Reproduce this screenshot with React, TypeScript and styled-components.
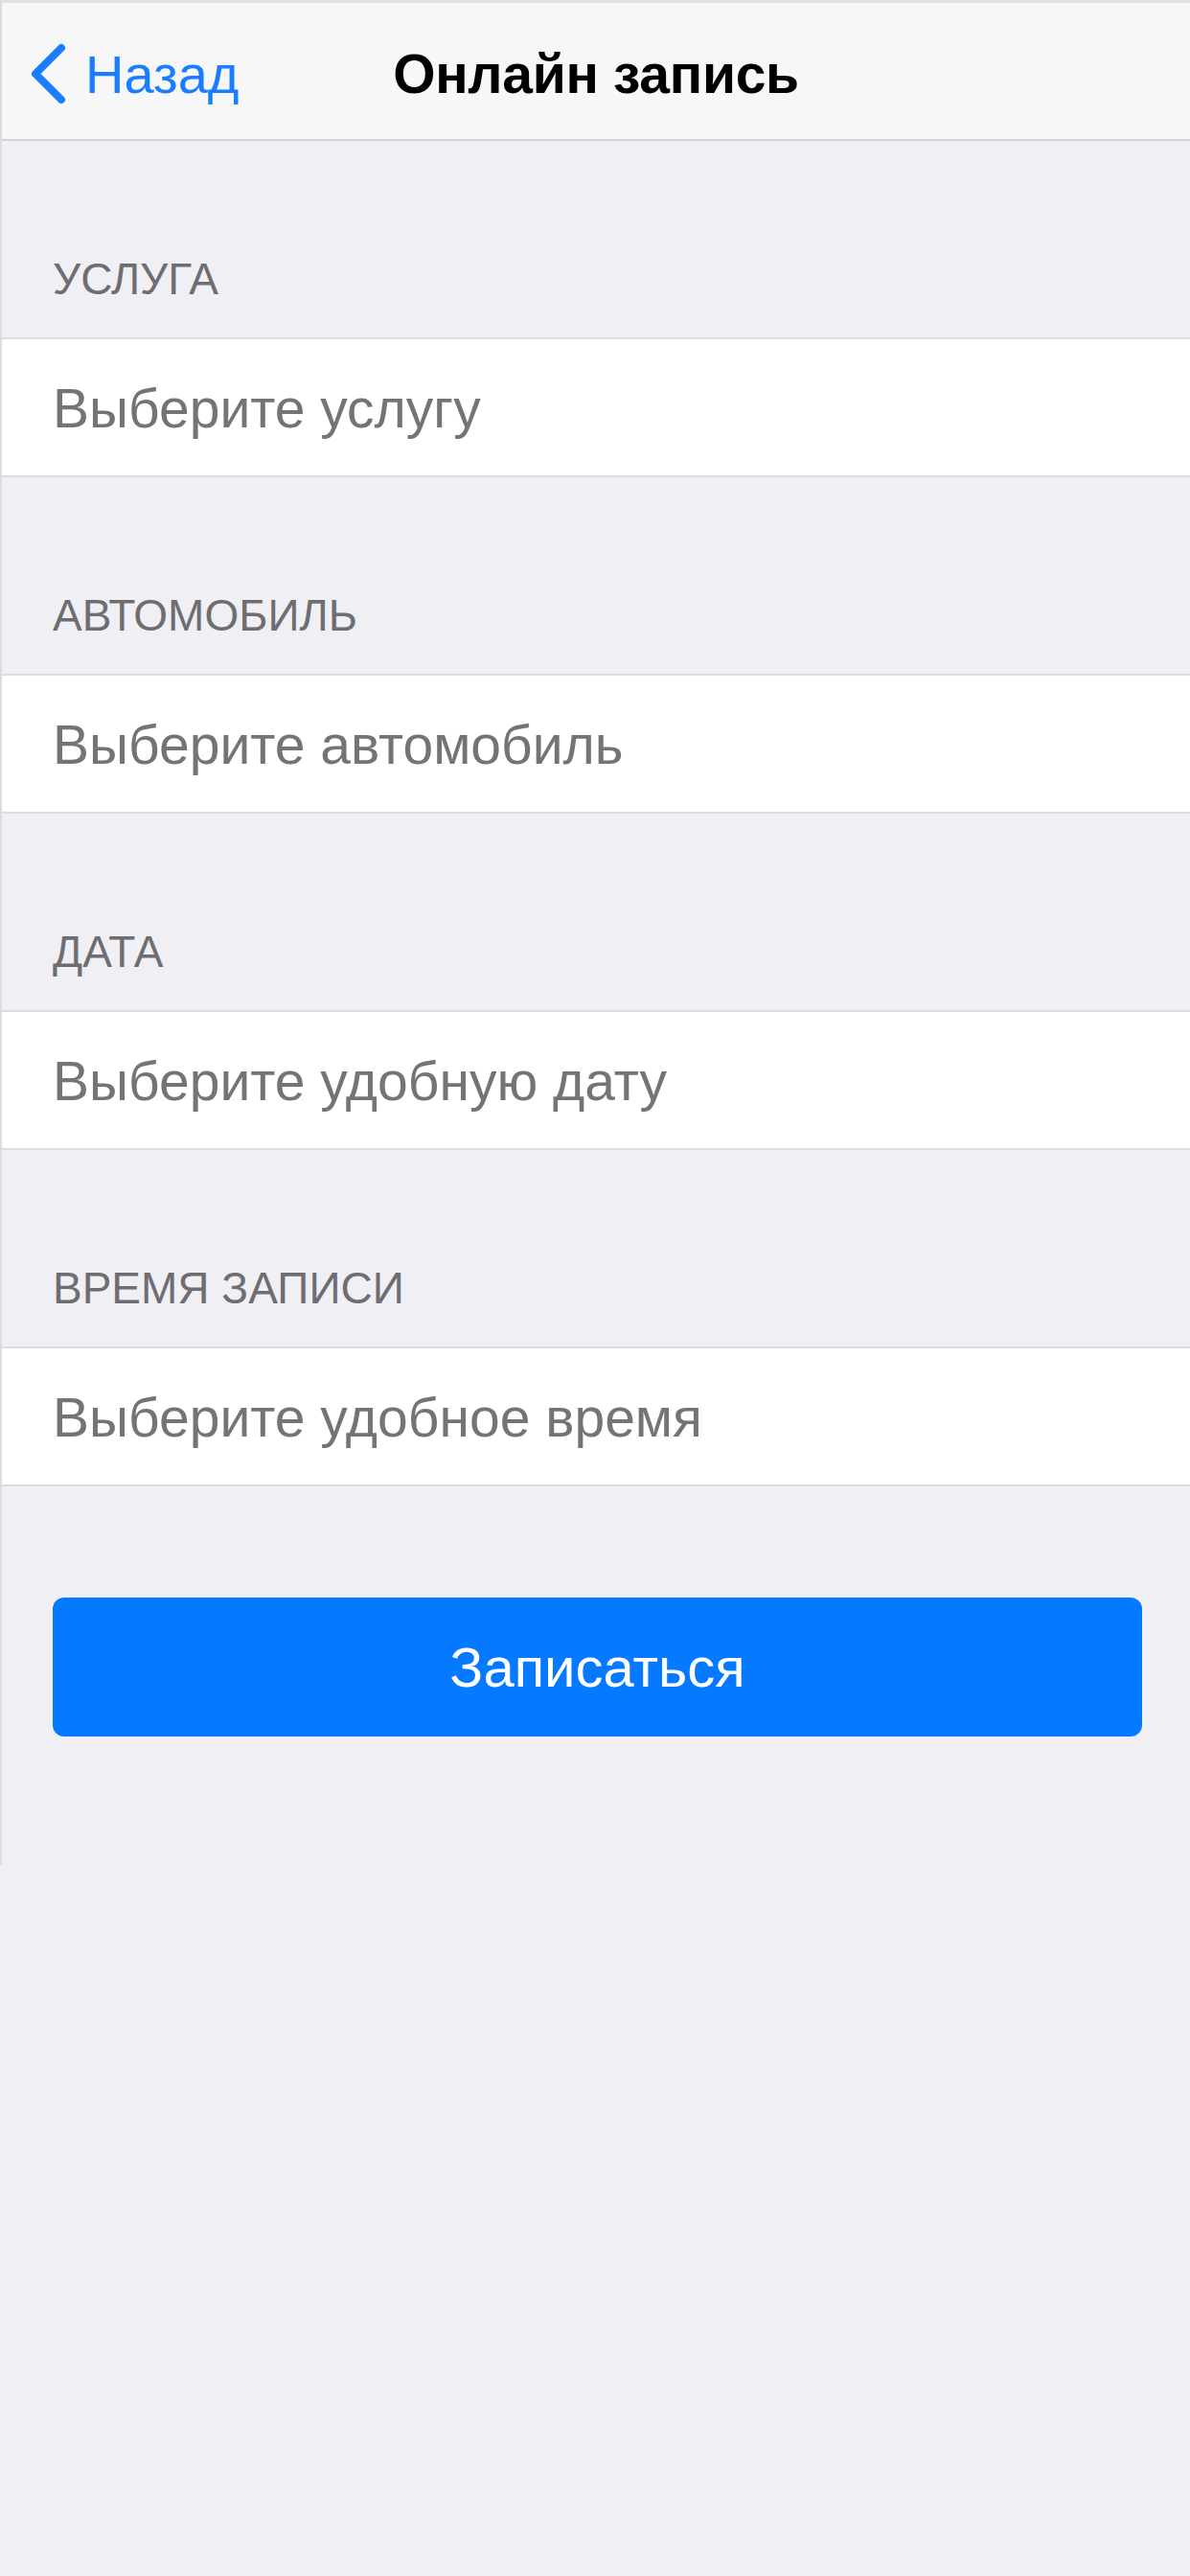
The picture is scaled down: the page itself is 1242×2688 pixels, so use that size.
import React from 'react';
import styled, { createGlobalStyle } from 'styled-components';

const GlobalStyle = createGlobalStyle`
  html, body {
    margin: 0;
    padding: 0;
    background: #efeff4;
  }
  body {
    font-family: 'Liberation Sans', Arial, sans-serif;
    -webkit-font-smoothing: antialiased;
  }
`;

const fields = [
  { label: 'УСЛУГА', placeholder: 'Выберите услугу' },
  { label: 'АВТОМОБИЛЬ', placeholder: 'Выберите автомобиль' },
  { label: 'ДАТА', placeholder: 'Выберите удобную дату' },
  { label: 'ВРЕМЯ ЗАПИСИ', placeholder: 'Выберите удобное время' },
];

const App = () => {
  return (
    <>
      <GlobalStyle />
      <Page>
        <Screen>
          <NavBar>
            <BackButton>
              <svg width="42" height="64" viewBox="0 0 42 64" fill="none">
                <path
                  d="M35 5 L8 32 L35 59"
                  stroke="#1a7cff"
                  strokeWidth="8"
                  strokeLinecap="round"
                  strokeLinejoin="round"
                />
              </svg>
              <BackLabel>Назад</BackLabel>
            </BackButton>
            <Title>Онлайн запись</Title>
            <span />
          </NavBar>

          {fields.map(f => (
            <Section key={f.label}>
              <SectionLabel>{f.label}</SectionLabel>
              <Row>
                <Placeholder>{f.placeholder}</Placeholder>
              </Row>
            </Section>
          ))}

          <SubmitButton type="button">Записаться</SubmitButton>
        </Screen>
      </Page>
    </>
  );
};

const Page = styled.div`
  min-height: 2688px;
  background: #efeff4;
`;

const Screen = styled.div`
  display: flex;
  flex-direction: column;
  height: 1946px;
  box-sizing: border-box;
  border-left: 2px solid #dcdce0;
`;

const NavBar = styled.header`
  display: grid;
  grid-template-columns: 1fr auto 1fr;
  align-items: center;
  height: 147px;
  box-sizing: border-box;
  background: #f7f7f7;
  border-top: 3px solid #e2e2e4;
  border-bottom: 2px solid #d3d3d6;
  padding-top: 6px;
`;

const BackButton = styled.div`
  display: flex;
  align-items: center;
  gap: 18px;
  padding-left: 27px;
  color: #1a7cff;
`;

const BackLabel = styled.span`
  font-size: 56px;
`;

const Title = styled.h1`
  margin: 0;
  font-size: 57px;
  font-weight: 700;
  color: #000;
  letter-spacing: -0.3px;
`;

const Section = styled.section`
  display: flex;
  flex-direction: column;
`;

const SectionLabel = styled.div`
  display: flex;
  align-items: flex-end;
  height: 205px;
  box-sizing: border-box;
  padding: 0 53px 35px;
  font-size: 46px;
  line-height: 52px;
  color: #6d6d72;
`;

const Row = styled.div`
  display: flex;
  align-items: center;
  height: 146px;
  box-sizing: border-box;
  padding: 2px 53px 0;
  background: #fff;
  border-top: 2px solid #dcdce0;
  border-bottom: 2px solid #dcdce0;
`;

const Placeholder = styled.span`
  font-size: 57px;
  color: #747474;
`;

const SubmitButton = styled.button`
  margin: 116px 50px 0 53px;
  height: 145px;
  border: none;
  border-radius: 12px;
  background: #0579ff;
  color: #fff;
  font-family: 'Liberation Sans', Arial, sans-serif;
  font-size: 58px;
`;

export default App;
